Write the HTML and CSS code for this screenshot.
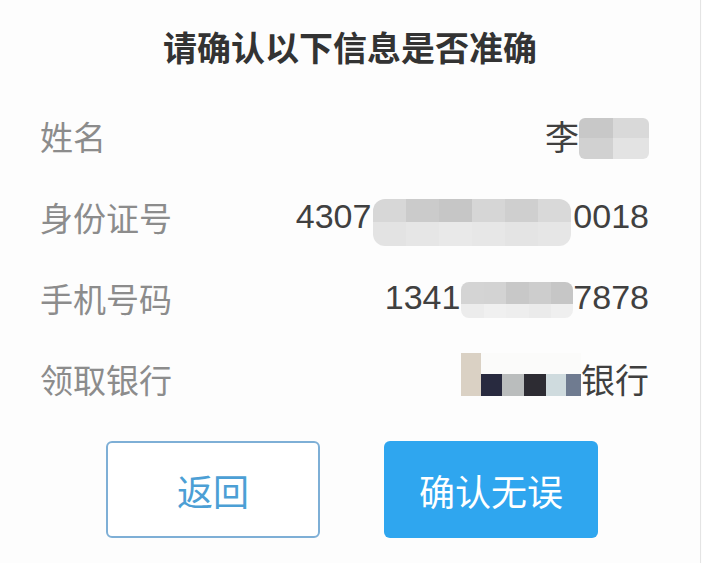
FILE: index.html
```html
<!DOCTYPE html>
<html lang="zh-CN">

<head>
	<meta charset="UTF-8">
	<meta name="viewport" content="width=device-width, initial-scale=1.0">
	<title>确认信息</title>
	<link rel="stylesheet" href="styles.css">
</head>

<body>

	<div class="dialog">
		<h1 class="title">请确认以下信息是否准确</h1>

		<div class="info">
			<div class="row">
				<span class="label">姓名</span>
				<span class="value">李<span class="blur blur-name">
						<i style="background:#c8c8c8"></i><i style="background:#d9d9d9"></i>
						<i style="background:#d1d1d1"></i><i style="background:#e3e3e3"></i>
					</span></span>
			</div>
			<div class="row">
				<span class="label">身份证号</span>
				<span class="value">4307<span class="blur blur-id">
						<i style="background:#d7d7d7"></i><i style="background:#cbcbcb"></i><i style="background:#c6c6c6"></i><i style="background:#d6d6d6"></i><i style="background:#cfcfcf"></i><i style="background:#d9d9d9"></i>
						<i style="background:#e3e3e3"></i><i style="background:#e6e6e6"></i><i style="background:#e9e9e9"></i><i style="background:#e7e7e7"></i><i style="background:#e4e4e4"></i><i style="background:#e6e6e6"></i>
					</span>0018</span>
			</div>
			<div class="row">
				<span class="label">手机号码</span>
				<span class="value">1341<span class="blur blur-phone">
						<i style="background:#d4d4d4"></i><i style="background:#d3d3d3"></i><i style="background:#c8c8c8"></i><i style="background:#cdcdcd"></i><i style="background:#c6c6c6"></i>
						<i style="background:#ececec"></i><i style="background:#f0f0f0"></i><i style="background:#eeeeee"></i><i style="background:#ebebeb"></i><i style="background:#efefef"></i>
					</span>7878</span>
			</div>
			<div class="row">
				<span class="label">领取银行</span>
				<span class="value"><span class="blur blur-bank">
						<i class="tall" style="background:#dad1c4"></i>
						<i style="background:#282a3f"></i><i style="background:#babdbd"></i><i style="background:#2d2c33"></i><i style="background:#cfdbde"></i><i style="background:#6f7b90"></i>
					</span>银行</span>
			</div>
		</div>

		<div class="actions">
			<button class="btn btn-back">返回</button>
			<button class="btn btn-ok">确认无误</button>
		</div>
	</div>

</body>

</html>
```

FILE: styles.css
```css
body {
	margin: 0;
	background-color: #fdfdfd;
	font-family: 'Liberation Sans', 'Noto Sans CJK SC', sans-serif;
	color: #333;
}

.dialog {
	width: 700px;
	height: 563px;
	border-right: 1px solid #e4e4e4;
}

.title {
	margin: 0 0 23px;
	padding-top: 22px;
	height: 50px;
	line-height: 50px;
	text-align: center;
	font-size: 34px;
	font-weight: bold;
	color: #333;
	font-family: 'Noto Sans CJK SC', sans-serif;
}

.info {
	padding: 0 51px 0 40px;
}

.row {
	display: flex;
	justify-content: space-between;
	align-items: center;
	height: 81px;
	font-size: 33px;
}

.label {
	color: #8c8c8c;
	font-family: 'Noto Sans CJK SC', sans-serif;
}

.value {
	display: flex;
	align-items: center;
	color: #404040;
	font-size: 34px;
}

/* pixelated blocks standing in for the hidden part */
.blur {
	display: grid;
	grid-auto-flow: row;
	overflow: hidden;
	border-radius: 6px;
}

.blur i {
	display: block;
}

.blur-name {
	width: 70px;
	height: 41px;
	margin-top: 5px;
	grid-template-columns: 34px 36px;
}

.blur-id {
	width: 198px;
	height: 47px;
	margin: 11px 2px 0 2px;
	grid-template-columns: repeat(6, 1fr);
	border-radius: 12px;
}

.blur-phone {
	width: 112px;
	height: 36px;
	margin: 5px 0 0 1px;
	grid-template-columns: repeat(5, 1fr);
	grid-template-rows: 22px 14px;
	border-radius: 8px;
}

.blur-bank {
	width: 120px;
	height: 43px;
	margin-bottom: 9px;
	grid-template-columns: 20px 21px 22px 22px 20px 15px;
	grid-template-rows: 21px 22px;
	background: #fbfbfa;
	border-radius: 0;
}

.blur-bank .tall {
	grid-row: 1 / 3;
}

.blur-bank i:nth-child(2) {
	grid-row: 2;
	grid-column: 2;
}

.blur-bank i:nth-child(3) {
	grid-row: 2;
	grid-column: 3;
}

.blur-bank i:nth-child(4) {
	grid-row: 2;
	grid-column: 4;
}

.blur-bank i:nth-child(5) {
	grid-row: 2;
	grid-column: 5;
}

.blur-bank i:nth-child(6) {
	grid-row: 2;
	grid-column: 6;
}

.actions {
	display: flex;
	justify-content: center;
	gap: 64px;
	margin-top: 22px;
	padding-left: 4px;
}

.btn {
	width: 214px;
	height: 97px;
	border-radius: 6px;
	font-size: 36px;
	font-family: 'Noto Sans CJK SC', sans-serif;
	cursor: pointer;
}

.btn-back {
	background-color: #fff;
	border: 2px solid #7eafd6;
	color: #4c9fd5;
}

.btn-ok {
	background-color: #2fa6ef;
	border: none;
	color: #fff;
}
```
